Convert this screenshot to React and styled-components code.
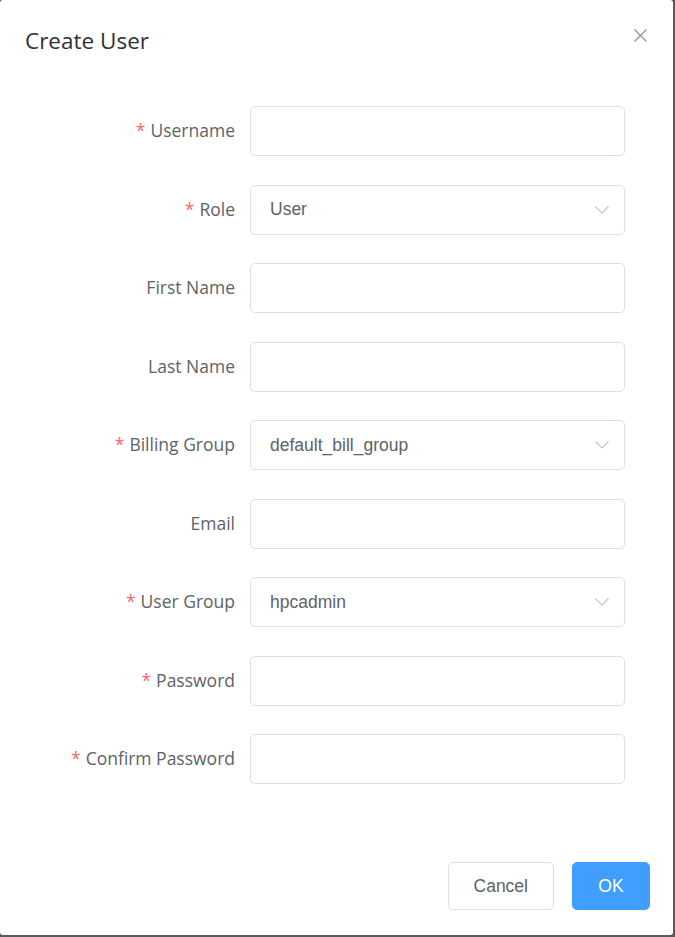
import React from "react";
import styled, { createGlobalStyle } from "styled-components";

const GlobalStyle = createGlobalStyle`
  html, body {
    margin: 0;
    padding: 0;
    background: #5a5a5a;
  }
`;

const fields = [
  { label: "Username", required: true },
  { label: "Role", required: true, select: "User" },
  { label: "First Name" },
  { label: "Last Name" },
  { label: "Billing Group", required: true, select: "default_bill_group" },
  { label: "Email" },
  { label: "User Group", required: true, select: "hpcadmin" },
  { label: "Password", required: true },
  { label: "Confirm Password", required: true },
];

const Dialog = styled.div`
  width: 673px;
  height: 935px;
  background: #fff;
  border-radius: 3px;
  display: flex;
  flex-direction: column;
  box-sizing: border-box;
`;

const Header = styled.div`
  position: relative;
  padding: 25px 25px 0;
`;

const Title = styled.h2`
  margin: 0;
  font-family: "Open Sans", "Noto Sans", sans-serif;
  font-weight: 400;
  font-size: 22.5px;
  line-height: 32px;
  color: #303133;
`;

const CloseButton = styled.button`
  position: absolute;
  top: 27px;
  right: 25px;
  width: 16px;
  height: 16px;
  padding: 0;
  border: 0;
  background: none;
  display: flex;
  align-items: center;
  justify-content: center;
`;

const Form = styled.form`
  padding: 49px 0 0 25px;
  display: flex;
  flex-direction: column;
  gap: 28.5px;
`;

const Row = styled.div`
  display: grid;
  grid-template-columns: 210px 375px;
  column-gap: 15px;
  align-items: center;
`;

const Label = styled.label`
  text-align: right;
  font-family: "Open Sans", "Noto Sans", sans-serif;
  font-size: 17.5px;
  line-height: 24px;
  margin-top: -2px;
  color: #606266;
  white-space: nowrap;

  .star {
    color: #f56c6c;
    margin-right: 5px;
  }
`;

const Field = styled.div`
  position: relative;
  height: 50px;
  box-sizing: border-box;
  border: 1px solid #dcdfe6;
  border-radius: 5px;
  background: #fff;
  display: flex;
  align-items: center;
  padding: 0 19px;
  font-family: "Liberation Sans", Arial, sans-serif;
  font-size: 17.5px;
  color: #606266;
`;

const Arrow = styled.svg`
  position: absolute;
  right: 15px;
  top: 50%;
  margin-top: -4px;
`;

const Footer = styled.div`
  margin-top: auto;
  padding: 0 23px 25px;
  display: flex;
  justify-content: flex-end;
  gap: 18px;
`;

const Button = styled.button`
  height: 48px;
  padding: 0 25px;
  border-radius: 5px;
  border: 1px solid ${(p) => (p.$primary ? "#409eff" : "#dcdfe6")};
  background: ${(p) => (p.$primary ? "#409eff" : "#fff")};
  color: ${(p) => (p.$primary ? "#fff" : "#606266")};
  font-family: "Liberation Sans", Arial, sans-serif;
  font-size: 17.5px;
  min-width: ${(p) => (p.$primary ? 78 : 106)}px;
  box-sizing: border-box;
  cursor: pointer;
`;

const App = () => (
  <>
    <GlobalStyle />
    <Dialog>
      <Header>
        <Title>Create User</Title>
        <CloseButton aria-label="close">
          <svg width="13" height="13" viewBox="0 0 13 13">
            <path d="M0.5 0.5 L12.5 12.5 M12.5 0.5 L0.5 12.5" stroke="#909399" strokeWidth="1.3" fill="none" />
          </svg>
        </CloseButton>
      </Header>
      <Form>
        {fields.map((f) => (
          <Row key={f.label}>
            <Label>
              {f.required && <span className="star">*</span>}
              {f.label}
            </Label>
            <Field>
              {f.select}
              {f.select && (
                <Arrow width="14" height="8" viewBox="0 0 14 8">
                  <path d="M0.5 0.5 L7 7 L13.5 0.5" stroke="#c0c4cc" strokeWidth="1.2" fill="none" />
                </Arrow>
              )}
            </Field>
          </Row>
        ))}
      </Form>
      <Footer>
        <Button type="button">Cancel</Button>
        <Button type="button" $primary>
          OK
        </Button>
      </Footer>
    </Dialog>
  </>
);

export default App;
